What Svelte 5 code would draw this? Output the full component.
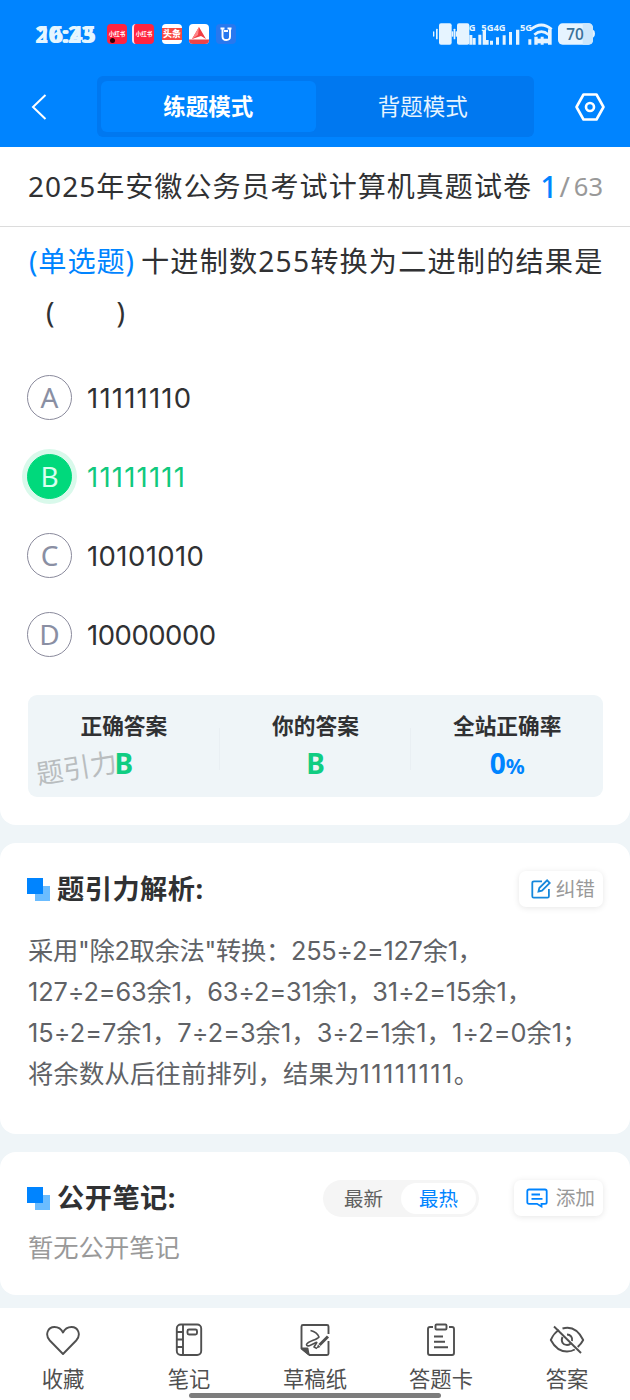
<script>
  // Quiz page: practice mode, one question with its explanation and notes

  let mode = 'practice';
  let noteOrder = 'hot';

  const correct = 'B';

  const options = [
    { key: 'A', text: '11111110' },
    { key: 'B', text: '11111111' },
    { key: 'C', text: '10101010' },
    { key: 'D', text: '10000000' }
  ];

  const analysis = [
    '采用"除2取余法"转换：255÷2=127余1，',
    '127÷2=63余1，63÷2=31余1，31÷2=15余1，',
    '15÷2=7余1，7÷2=3余1，3÷2=1余1，1÷2=0余1；'
  ];

  const tabs = [
    { id: 'fav', label: '收藏' },
    { id: 'note', label: '笔记' },
    { id: 'draft', label: '草稿纸' },
    { id: 'card', label: '答题卡' },
    { id: 'answer', label: '答案' }
  ];
</script>

<div class="page">
  <header class="header">
    <div class="status-bar">
      <div class="clock"><span>20:23</span><span>16:45</span></div>
      <div class="apps">
        <div class="app red">小红书<i></i></div>
        <div class="app red light">小红书</div>
        <div class="app news"><b>头条</b></div>
        <div class="app map">
          <svg viewBox="0 0 20 20"><path d="M10 3 17 15 12 12 3 15Z" fill="#f13d43" /><path d="M10 3 9 11 3 15Z" fill="#ff8588" /><path d="M0 15.500h20V20H0z" fill="#ee4348" /></svg>
        </div>
        <div class="app blue">
          <svg viewBox="0 0 20 20"><path d="M4.500 4.500h4M11.500 4.500h4M6.500 4.500v8q0 3.500 3.800 3.500t3.700-3.500v-8M8 7h4" fill="none" stroke="#fff" stroke-width="1.900" /></svg>
        </div>
      </div>
      <svg class="signals" viewBox="0 0 630 150">
        <g fill="#e6f4ff">
          <rect x="39" y="64" width="4" height="16" rx="2" />
          <rect x="48" y="56" width="5" height="32" rx="2" />
          <rect x="57" y="40" width="38" height="64" rx="6" />
          <rect x="95" y="64" width="5" height="16" />
          <rect x="101" y="56" width="5" height="32" rx="2" />
          <rect x="107" y="64" width="5" height="16" />
          <rect x="111" y="40" width="37" height="64" rx="6" />
          <path d="M148 75h9v29h-9zM158 84h9v20h-9zM175 74h9v30h-9zM188 60h10v44h-10zM194 90h12v14h-12zM210 92h9v12h-9zM228 82h9v22h-9zM248 76h9v28h-9zM267 66h9v38h-9zM288 59h10v45h-10zM325 88h9v16h-9zM343 80h10v24h-10zM362 80h9v24h-9zM384 58h11v46h-11z" />
          <path d="M348 86h36v14h-36z" />
          <rect x="414" y="40" width="105" height="64" rx="14" />
          <path d="M519 59q6 2 6 12t-6 12z" />
        </g>
        <path d="M488 40h17q14 0 14 14v36q0 14-14 14h-17z" fill="#cde7fb" />
        <g fill="none" stroke="#e6f4ff" stroke-width="8"><path d="M333 58q31-26 62 0" /><path d="M343 74q21-18 43 0" /></g>
        <g fill="#e6f4ff" class="net">
          <text x="130" y="63">4G</text><text x="184" y="63">5G4G</text><text x="300" y="63">5G</text>
        </g>
        <text x="439" y="89" class="battery">70</text>
      </svg>
    </div>

    <nav class="mode-bar">
      <svg class="back" viewBox="0 0 16 28"><path d="M14.500 2 2 14l12.500 12" /></svg>
      <div class="segment">
        <button class:active={mode === 'practice'} on:click={() => (mode = 'practice')}>练题模式</button>
        <button class:active={mode === 'recite'} on:click={() => (mode = 'recite')}>背题模式</button>
      </div>
      <svg class="settings" viewBox="0 0 30 28"><path d="M8.500 1.500h13L28.500 14l-7 12.500h-13L1.500 14Z" /><circle cx="15" cy="14" r="4" /></svg>
    </nav>
  </header>

  <section class="question-card">
    <div class="paper">
      <h1>2025年安徽公务员考试计算机真题试卷</h1>
      <div class="progress"><b>1</b><i>/</i><span>63</span></div>
    </div>

    <div class="question">
      <div class="line"><em>(单选题)</em><span class="stem">十进制数255转换为二进制的结果是</span></div>
      <div class="line blank"><span>(</span><span>)</span></div>
    </div>

    <ul class="options">
      {#each options as option}
        <li class:right={option.key === correct}>
          <span class="letter">{option.key}</span>
          <span class="value v{option.key}">{option.text}</span>
        </li>
      {/each}
    </ul>

    <div class="result">
      <div class="cell"><h4>正确答案</h4><p>{correct}</p></div>
      <div class="cell"><h4>你的答案</h4><p>B</p></div>
      <div class="cell rate"><h4>全站正确率</h4><p>0<small>%</small></p></div>
      <span class="watermark">题引力</span>
    </div>
  </section>

  <section class="card analysis">
    <div class="card-head">
      <span class="mark"></span>
      <h2>题引力解析:</h2>
      <button class="action">
        <svg viewBox="0 0 20 20"><path d="M11 2.300H3Q1.300 2.300 1.300 4v13.300q0 1.400 1.400 1.400H16.500q1.400 0 1.400-1.400V10" /><path d="M7.500 12.500l.8-3.500 7.800-7.700 2.700 2.700-7.800 7.700Z" /></svg>
        纠错
      </button>
    </div>
    <div class="analysis-text">
      {#each analysis as text, i}
        <p class="l{i + 1}">{text}</p>
      {/each}
      <p class="l4">将余数从后往前排列，结果为<span class="bits">11111111</span>。</p>
    </div>
  </section>

  <section class="card notes">
    <div class="card-head">
      <span class="mark"></span>
      <h2>公开笔记:</h2>
      <div class="order">
        <button class:active={noteOrder === 'new'} on:click={() => (noteOrder = 'new')}>最新</button>
        <button class:active={noteOrder === 'hot'} on:click={() => (noteOrder = 'hot')}>最热</button>
      </div>
      <button class="action add">
        <svg viewBox="0 0 22 20"><path d="M3 1.500h16q1.700 0 1.700 1.700v11q0 1.600-1.700 1.600h-3.500v2.700L11 15.800H3q-1.700 0-1.700-1.600v-11Q1.300 1.500 3 1.500Z" /><path d="M5.500 6.500H14M5.500 10.800H16.500" /></svg>
        添加
      </button>
    </div>
    <p class="empty">暂无公开笔记</p>
  </section>

  <footer class="tabbar">
    {#each tabs as tab}
      <div class="tab">
        <svg viewBox="0 0 36 36">
          {#if tab.id === 'fav'}
            <path d="M18 32 4.800 18.500C-.5 12.500 3 5 9.500 5c4 0 6.800 2 8.500 5.500C19.700 7 22.500 5 26.500 5 33 5 36.500 12.500 31.200 18.500Z" />
          {:else if tab.id === 'note'}
            <rect x="5.800" y="2.500" width="24.400" height="30.500" rx="4" />
            <path d="M12 2.500V33M5.800 10H12M5.800 17.500H12M5.800 25H12" />
            <rect x="16.500" y="7.500" width="9.500" height="5" rx="1.500" />
          {:else if tab.id === 'draft'}
            <path d="M31.500 12V4.500Q31.500 3 30 3H6Q4.500 3 4.500 4.500V26.500l8 6.500H30q1.500 0 1.500-1.500V19" />
            <path d="M5 26.500h5.500l1 5.500Z" fill="#505050" />
            <path d="M13.500 8.500c4 1 7.500 4 8.500 6.500-2 3-11 4-12.500 7.500 0 3.500 6.500-.5 9.500-2 2.500-1-1.500 3-2 4.500l3 1.500" stroke-width="1.600" />
            <path d="M22.500 23 31 14.500" stroke-width="3" />
            <path d="M19.500 26.500l1.500-4 2.500 2.500Z" fill="#505050" stroke="none" />
          {:else if tab.id === 'card'}
            <path d="M10 5H7Q5 5 5 7V31Q5 33 7 33H29q2 0 2-2V7q0-2-2-2H26" />
            <rect x="12.500" y="2.500" width="11" height="5" rx="1" />
            <path d="M11 14.500h9M11 19.800h11M11 25.200h14" />
          {:else}
            <path d="M10 8C6.500 10 4 13 1.800 18 6 26 11 29.500 18 29.500c3 0 5.500-.6 7.800-2M13.500 6.500c7-2 15 0 20.700 11.500-1.500 3-3.300 5-5.500 7" />
            <path d="M13.500 15c-2 4.500.5 8 4.500 8 1.500 0 2.500-.5 3.500-1.300M18 12.500c3.500 0 5.800 3 5 6.500" />
            <path d="M5 4.500 32 31" />
          {/if}
        </svg>
        <span>{tab.label}</span>
      </div>
    {/each}
    <span class="home-indicator"></span>
  </footer>
</div>

<style>
  :global(body) {
    margin: 0;
    background: #eff5f8;
  }

  .page {
    width: 630px;
    height: 1400px;
    overflow: hidden;
    display: flex;
    flex-direction: column;
    background: #eff5f8;
    color: #303133;
    font-family: "Noto Sans", "Noto Sans CJK SC", sans-serif;
  }

  .page * {
    box-sizing: border-box;
  }

  h1, h2, h4, p, ul {
    margin: 0;
    padding: 0;
    font-weight: 400;
  }

  button {
    border: 0;
    padding: 0;
    background: none;
    font-family: inherit;
  }

  i, em {
    font-style: normal;
  }

  svg {
    display: block;
    flex: none;
  }

  /* header */
  .header {
    height: 147px;
    flex: none;
    background: #0084ff;
  }

  .status-bar {
    display: flex;
    align-items: center;
    height: 76px;
    padding: 0 0 8px 35px;
  }

  .clock {
    display: grid;
    width: 72px;
    color: #e6f6ff;
    font: 700 23px/26px "Noto Sans", sans-serif;
  }

  .clock span {
    grid-area: 1 / 1;
  }

  .clock span + span {
    padding-left: 2px;
  }

  .apps {
    display: grid;
    grid-template-columns: 25px 30px 27px 27px 20px;
    flex: 1;
  }

  .app {
    position: relative;
    display: flex;
    align-items: center;
    justify-content: center;
    width: 20px;
    height: 20px;
    overflow: hidden;
    border-radius: 4px;
    background: #fff;
    color: #fff;
    font-size: 5.500px;
    font-weight: 700;
    white-space: nowrap;
  }

  .app svg {
    width: 20px;
    height: 20px;
  }

  .red {
    background: #ff2440;
  }

  .red.light {
    width: 22px;
    border-left: 2px solid #ffdfe8;
  }

  .red i {
    position: absolute;
    left: 3px;
    bottom: 1px;
    width: 5px;
    height: 5px;
    border-radius: 50%;
    background: #33000a;
  }

  .news b {
    width: 20px;
    background: #f84a42;
    font-size: 9px;
    line-height: 12px;
    text-align: center;
  }

  .blue {
    background: #2878ee;
  }

  .signals {
    width: 210px;
    height: 50px;
    margin-top: 1px;
  }

  .net {
    font: 700 28px "Open Sans", sans-serif;
  }

  .battery {
    fill: #3b7299;
    font: 600 46px "Open Sans", sans-serif;
  }

  .mode-bar {
    display: flex;
    align-items: center;
    height: 61px;
    padding: 0 25px 0 31px;
  }

  .back {
    width: 16px;
    height: 28px;
    fill: none;
    stroke: #fff;
    stroke-width: 2;
  }

  .segment {
    display: flex;
    width: 437px;
    height: 61px;
    margin-left: 50px;
    padding: 5px 4px;
    border-radius: 6px;
    background: #0078f0;
  }

  .segment button {
    flex: 1;
    border-radius: 6px;
    color: #e6f4ff;
    font-size: 22.500px;
    line-height: 50px;
  }

  .segment .active {
    background: #0084ff;
    color: #fff;
    font-weight: 700;
  }

  .settings {
    width: 30px;
    height: 28px;
    margin-left: auto;
    fill: none;
    stroke: #fff;
    stroke-width: 2.600;
    stroke-linejoin: round;
  }

  /* question */
  .question-card {
    height: 678px;
    flex: none;
    border-radius: 0 0 16px 16px;
    background: #fff;
  }

  .paper {
    display: flex;
    justify-content: space-between;
    height: 80px;
    padding: 0 27px 0 28px;
    border-bottom: 1px solid #dcdcdc;
    line-height: 79px;
    white-space: nowrap;
  }

  h1 {
    font-size: 28px;
    letter-spacing: 1.050px;
  }

  .progress {
    display: flex;
    color: #999;
    font-size: 25.500px;
  }

  .progress b {
    color: #0084ff;
    font-size: 30px;
    font-weight: 500;
  }

  .progress i {
    padding: 0 4px 0 2px;
    font-size: 28px;
  }

  .question {
    height: 119px;
    padding: 9px 0 0 29px;
    font-size: 28.200px;
    line-height: 51px;
  }

  .line {
    display: flex;
    white-space: nowrap;
    letter-spacing: 1.150px;
  }

  .line em {
    width: 112px;
    color: #0084ff;
    letter-spacing: 0.900px;
  }

  .blank {
    gap: 61px;
    padding-left: 17px;
  }

  .options {
    height: 344px;
    padding: 12px 28px 0 27px;
    list-style: none;
  }

  .options li {
    display: flex;
    align-items: center;
    height: 79px;
    gap: 15px;
    font-size: 27.500px;
  }

  .value {
    font-family: Inter, sans-serif;
    letter-spacing: 1.200px;
  }

  .vC {
    letter-spacing: 0.400px;
  }

  .vD {
    letter-spacing: -0.500px;
  }

  .letter {
    width: 45px;
    height: 45px;
    border: 1.500px solid #8a8a9c;
    border-radius: 50%;
    color: #8a8fa3;
    font: 28px/43px "Noto Sans", sans-serif;
    text-align: center;
  }

  .right {
    color: #10c97e;
  }

  .right .letter {
    border-color: #00d97c;
    background: #00d97c;
    box-shadow: 0 0 0 5px #d9f9eb;
    color: #d9ffef;
  }

  .result {
    position: relative;
    display: grid;
    grid-template-columns: repeat(3, 1fr);
    height: 102px;
    margin: 5px 27px 0 28px;
    padding-top: 16px;
    border-radius: 9px;
    background: #eff5f8;
    text-align: center;
  }

  .cell {
    background: linear-gradient(#e9eff3, #e9eff3) right 17px / 1px 42px no-repeat;
  }

  .rate {
    background: none;
  }

  .cell h4 {
    font-size: 21.700px;
    font-weight: 700;
    line-height: 30px;
  }

  .cell p {
    color: #10cd82;
    font: 700 28px/44px "Noto Sans", sans-serif;
  }

  .rate p {
    color: #0084ff;
  }

  .rate small {
    font-size: 21px;
  }

  .watermark {
    position: absolute;
    left: 8px;
    top: 54px;
    color: #b9bdbf;
    font-size: 27px;
    line-height: 38px;
    transform: rotate(-9deg);
  }

  /* cards */
  .card {
    flex: none;
    margin-top: 18px;
    padding: 28px 27px 0;
    border-radius: 16px;
    background: #fff;
  }

  .analysis {
    height: 291px;
  }

  .notes {
    height: 143px;
  }

  .card-head {
    display: flex;
    align-items: center;
    height: 36px;
  }

  .mark {
    width: 23px;
    height: 23px;
    margin-right: 7px;
    background:
      linear-gradient(#0084ff, #0084ff) 0 0 / 16px 16px no-repeat,
      linear-gradient(#6bbcff, #6bbcff) 8px 8px / 15px 15px no-repeat;
  }

  h2 {
    margin-right: auto;
    font-size: 27.200px;
    font-weight: 700;
    letter-spacing: 0.500px;
    line-height: 36px;
    white-space: nowrap;
  }

  .action {
    display: flex;
    align-items: center;
    justify-content: space-between;
    width: 84px;
    height: 36px;
    padding: 0 8px 0 12px;
    border-radius: 7px;
    box-shadow: 0 1px 6px rgba(0, 0, 0, 0.1);
    color: #999;
    font-size: 19.700px;
    line-height: 36px;
  }

  .action svg {
    width: 20px;
    height: 20px;
    fill: none;
    stroke: #1688dc;
    stroke-width: 1.800;
  }

  .add {
    width: 89px;
  }

  .add svg {
    width: 22px;
    stroke: #0084ff;
  }

  .analysis-text {
    padding: 23px 0 0 1px;
    color: #606266;
    font-family: Inter, "Noto Sans CJK SC", sans-serif;
    font-size: 25.300px;
    line-height: 41px;
    white-space: nowrap;
  }

  .l1 {
    letter-spacing: -0.300px;
  }

  .l2 {
    letter-spacing: -0.100px;
  }

  .l3 {
    letter-spacing: 0.050px;
  }

  .l4 {
    letter-spacing: 0.200px;
  }

  .bits {
    letter-spacing: 1.500px;
  }

  .order {
    display: flex;
    width: 156px;
    height: 37px;
    margin-right: 35px;
    padding: 3px;
    border-radius: 19px;
    background: #f5f5f5;
  }

  .order button {
    width: 75px;
    border-radius: 16px;
    color: #606060;
    font-size: 19.500px;
    line-height: 31px;
  }

  .order .active {
    background: #fff;
    color: #0084ff;
  }

  .empty {
    padding: 13px 0 0 1px;
    color: #999;
    font-size: 25.300px;
    line-height: 36px;
  }

  /* bottom bar */
  .tabbar {
    position: relative;
    display: grid;
    grid-template-columns: repeat(5, 1fr);
    height: 92px;
    margin-top: 13px;
    padding-top: 14px;
    background: #fff;
  }

  .tab {
    display: flex;
    flex-direction: column;
    align-items: center;
    color: #505050;
    font-size: 21.300px;
    line-height: 30px;
  }

  .tab svg {
    width: 36px;
    height: 36px;
    margin-bottom: 6px;
    fill: none;
    stroke: #505050;
    stroke-width: 1.900;
    stroke-linejoin: round;
  }

  .home-indicator {
    position: absolute;
    left: 189px;
    bottom: 2px;
    width: 252px;
    height: 5px;
    border-radius: 3px;
    background: #7d7d7d;
  }
</style>
